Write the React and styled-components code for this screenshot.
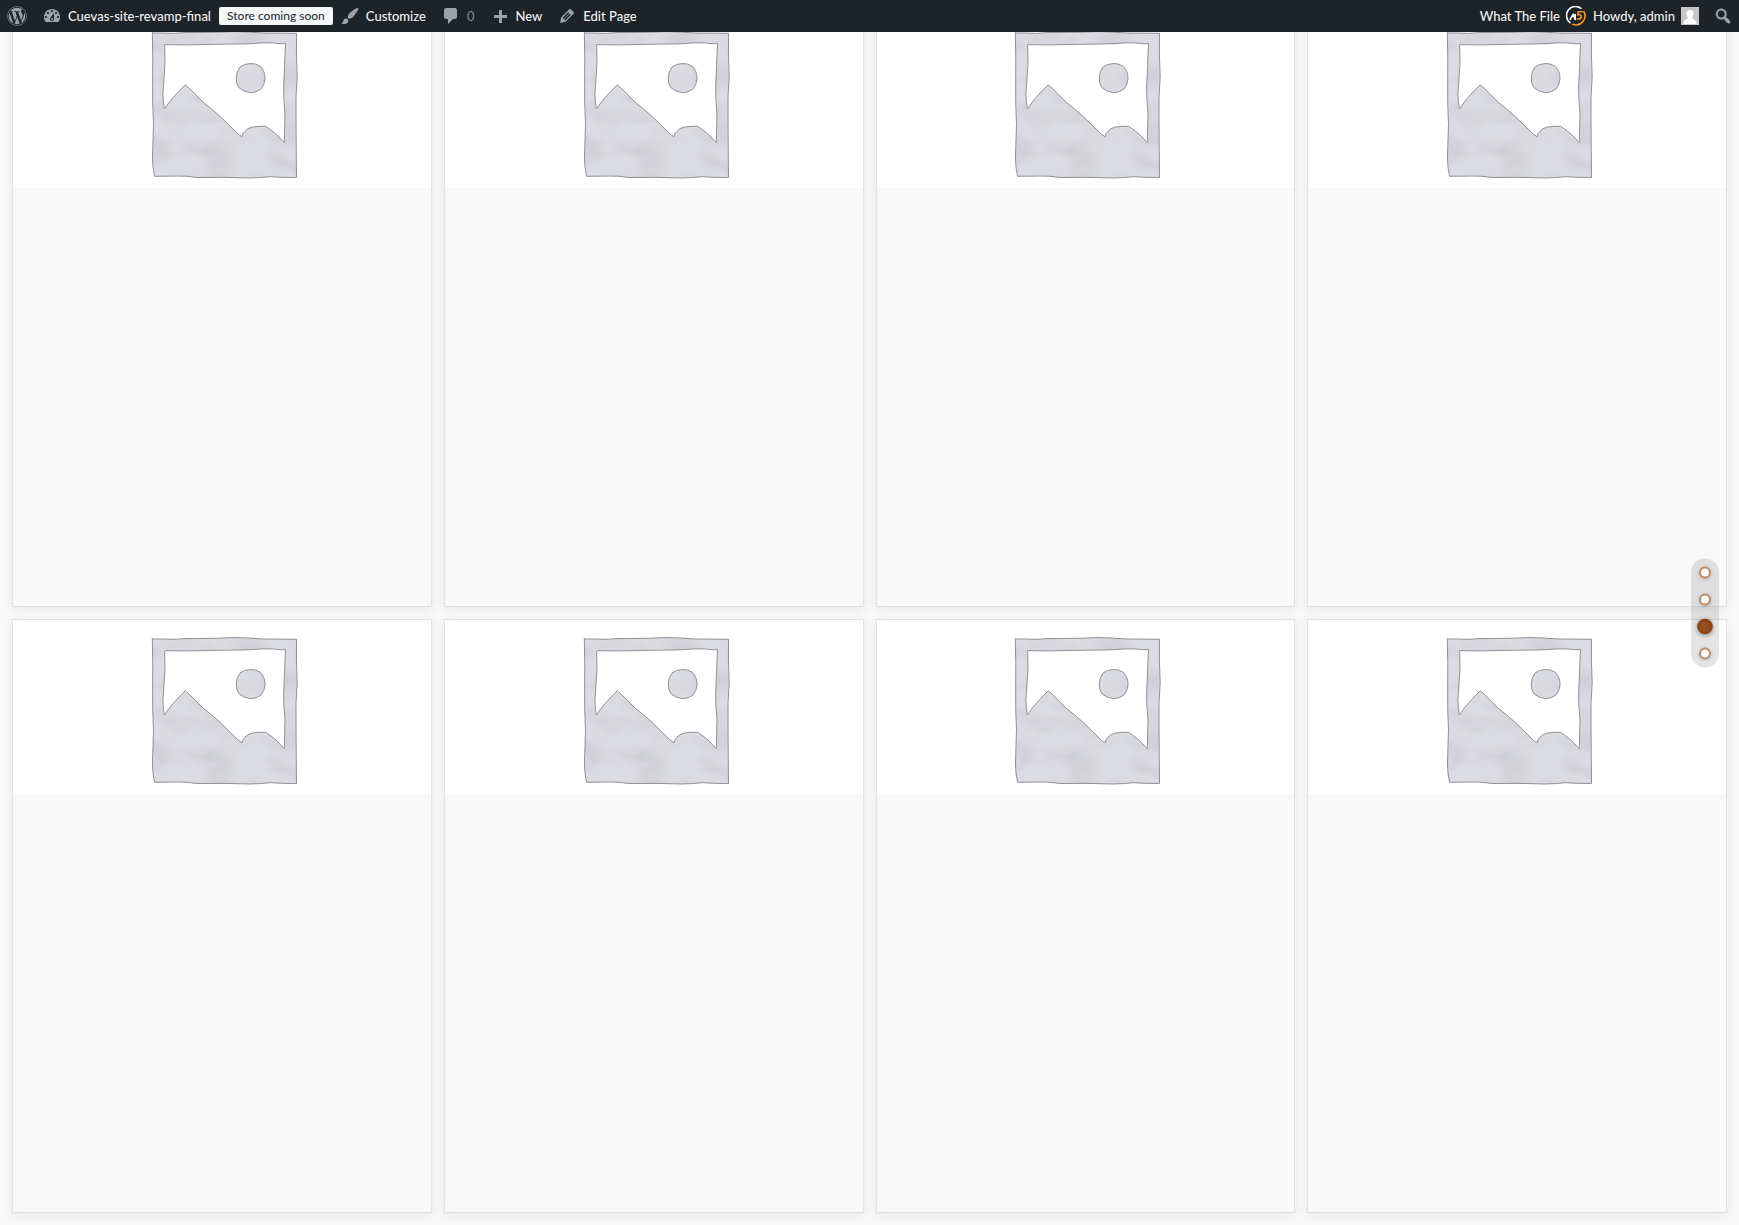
import React, { useId } from "react";
import styled, { createGlobalStyle } from "styled-components";
import { FaWordpress } from "react-icons/fa";

const Global = createGlobalStyle`
  *, *::before, *::after { box-sizing: border-box; }
  body {
    margin: 0;
    background: #f9f9f9;
    font-family: Lato, "Noto Sans", sans-serif;
  }
`;

const AdminBar = styled.header`
  position: fixed;
  inset: 0 0 auto 0;
  z-index: 10;
  height: 32px;
  display: flex;
  justify-content: space-between;
  background: #1d2327;
`;

const Group = styled.nav`
  display: flex;
  align-items: center;
`;

const BarLink = styled.a`
  height: 32px;
  display: flex;
  align-items: center;
  gap: 6px;
  padding: 0 ${(p) => (p.$joined ? 0 : 8)}px 0 7px;
  color: ${(p) => (p.$muted ? "#7f8387" : "#f0f0f1")};
  font-size: 13px;
  font-weight: 500;
  line-height: 32px;
  text-decoration: none;
  white-space: nowrap;
`;

const Badge = styled.a`
  height: 18px;
  padding: 0 8px;
  border-radius: 2px;
  background: #f6f7f7;
  color: #2c3338;
  font-size: 12px;
  font-weight: 500;
  line-height: 18px;
  text-decoration: none;
  white-space: nowrap;
`;

const SearchButton = styled.button`
  width: 32px;
  height: 32px;
  display: grid;
  place-items: center;
  padding: 0;
  border: 0;
  background: none;
`;

const Icon = styled.svg`
  width: 20px;
  height: 20px;
  flex: none;
  fill: #9ca2a7;
`;

const WordPressMark = styled(FaWordpress)`
  width: 20px;
  height: 20px;
  color: #9ca2a7;
`;

const Avatar = styled.svg`
  width: 18px;
  height: 18px;
  flex: none;
`;

const Products = styled.main`
  display: grid;
  grid-template-columns: repeat(4, minmax(0, 1fr));
  gap: 12px;
  padding: 13px 12px 12px;
`;

const Card = styled.article`
  border: 1px solid #e2e2e2;
  background: #f8f8f8;
  box-shadow: 0 2px 10px rgba(0, 0, 0, 0.08);
`;

const Thumb = styled.a`
  display: flex;
  justify-content: center;
  background: #fff;
`;

const Picture = styled.svg`
  width: 174px;
  height: 174px;
`;

const Details = styled.div`
  aspect-ratio: 1;
`;

const Dots = styled.nav`
  position: fixed;
  top: 50%;
  right: 20px;
  transform: translateY(-50%);
  width: 28px;
  display: flex;
  flex-direction: column;
  align-items: center;
  gap: 15px;
  padding: 8px 0;
  border-radius: 14px;
  background: rgba(0, 0, 0, 0.1);
`;

const Dot = styled.button`
  width: 12px;
  height: 12px;
  padding: 0;
  border: 2px solid ${(p) => (p.$active ? "#8b4513" : "#b98a6a")};
  border-radius: 50%;
  background: ${(p) => (p.$active ? "#955022" : "#fcfcfc")};
  box-shadow: 0 1px 4px rgba(0, 0, 0, ${(p) => (p.$active ? 0.4 : 0.2)});
  transform: ${(p) => (p.$active ? "scale(1.3)" : "none")};
`;

const ICONS = {
  dashboard:
    "M3.76 16h12.480c1.100-1.370 1.760-3.110 1.760-5 0-4.420-3.580-8-8-8s-8 3.580-8 8c0 1.890.66 3.630 1.760 5zM10 4c.55 0 1 .45 1 1s-.45 1-1 1-1-.45-1-1 .45-1 1-1zM6 6c.55 0 1 .45 1 1s-.45 1-1 1-1-.45-1-1 .45-1 1-1zm8 0c.55 0 1 .45 1 1s-.45 1-1 1-1-.45-1-1 .45-1 1-1zm-5.370 5.550L12 7v6c0 1.100-.9 2-2 2s-2-.9-2-2c0-.57.24-1.080.63-1.450zM4 10c.55 0 1 .45 1 1s-.45 1-1 1-1-.45-1-1 .45-1 1-1zm12 0c.55 0 1 .45 1 1s-.45 1-1 1-1-.45-1-1 .45-1 1-1zm-5 3c0-.55-.45-1-1-1s-1 .45-1 1 .45 1 1 1 1-.45 1-1z",
  brush:
    "M18.330 3.570s.27-.8-.31-1.360c-.53-.52-1.220-.24-1.220-.24-.61.3-5.760 3.470-7.670 5.570-.86.96-2.060 3.790-1.090 4.820.92.98 3.960-.17 4.790-1 2.060-2.060 5.210-7.170 5.500-7.790zM1.400 17.650c2.370-1.560 1.460-3.410 3.230-4.640.93-.65 2.220-.62 3.080.29.63.67.8 2.570-.16 3.460-1.570 1.450-4 1.550-6.150.89z",
  comment: "M5 2h9c1.100 0 2 .9 2 2v7c0 1.100-.9 2-2 2h-2l-5 5v-5H5c-1.100 0-2-.9-2-2V4c0-1.100.9-2 2-2z",
  plus: "M17 9v3h-5v5H9v-5H4V9h5V4h3v5h5z",
  pencil:
    "M13.890 3.390l2.710 2.720c.46.46.42 1.240.03 1.640l-8.010 8.020-5.560 1.160 1.160-5.580s7.600-7.630 7.990-8.030c.39-.39 1.220-.39 1.680.07zm-2.730 2.790l-5.590 5.610 1.110 1.110 5.540-5.650zm-2.970 8.230l5.580-5.600-1.070-1.080-5.590 5.600z",
  search:
    "M12.140 4.180c1.870 1.870 2.110 4.750.72 6.890.12.1.22.21.36.31.2.16.47.36.81.59.34.24.56.39.66.47.42.31.73.57.94.78.32.32.6.65.84 1 .25.35.44.69.59 1.040.14.35.21.68.18 1-.02.32-.14.59-.36.81s-.49.34-.81.36c-.31.02-.65-.04-.99-.19-.35-.14-.7-.34-1.040-.59-.35-.24-.68-.52-1-.84-.21-.21-.47-.52-.77-.93-.1-.13-.25-.35-.47-.66-.22-.32-.4-.57-.56-.78-.16-.2-.29-.35-.44-.5-2.070 1.090-4.690.76-6.440-.98-2.140-2.150-2.140-5.640 0-7.780 2.150-2.150 5.630-2.150 7.780 0zm-1.410 6.360c1.360-1.370 1.360-3.580 0-4.950-1.370-1.370-3.590-1.370-4.950 0-1.370 1.370-1.370 3.580 0 4.950 1.360 1.370 3.580 1.370 4.950 0z",
};

function BarIcon({ name }) {
  return (
    <Icon viewBox="0 0 20 20" aria-hidden="true">
      <path d={ICONS[name]} fillRule="evenodd" />
    </Icon>
  );
}

function FileLogo() {
  return (
    <Icon viewBox="0 0 20 20" aria-hidden="true">
      <g fill="none" strokeLinecap="round">
        <path d="M15 2.300 A9 9 0 0 0 4 16.600" stroke="#fff" strokeWidth="1.600" />
        <path d="M17.800 5.500 A9 9 0 0 1 6.800 18.300" stroke="#f7981d" strokeWidth="1.600" />
        <path d="M4.200 13.400 L7.300 8.200 L9.200 13.400 V8.600" stroke="#fff" strokeWidth="1.600" strokeLinejoin="round" />
        <path d="M16 5.800 H12.200 L11.800 8.800 Q15.600 8.400 15.200 11 Q14.700 13.400 11.400 13" stroke="#f7981d" strokeWidth="1.600" />
      </g>
    </Icon>
  );
}

function AdminAvatar() {
  return (
    <Avatar viewBox="0 0 18 18" aria-hidden="true">
      <rect width="18" height="18" fill="#c5c7c9" />
      <path
        d="M9 3 C11.600 3 12.800 4.800 12.500 7 Q12.200 9.500 11 10.600 Q11 11.800 12.500 12.300 Q15.300 13.200 15.500 17 H2.500 Q2.700 13.200 5.500 12.300 Q7 11.800 7 10.600 Q5.800 9.500 5.500 7 C5.200 4.800 6.400 3 9 3 Z"
        fill="#fff"
      />
    </Avatar>
  );
}

const FRAME =
  "M17.300 18.400 L19 19 Q28 18.800 38.500 19.400 Q50 18.200 61.500 18.500 Q82 18.500 101 17.500 Q115 18 128 19 L161.500 19.300 Q161 40 162.200 63 Q160.400 82 161 105 Q161.200 135 161.500 163.500 Q148 163.600 135 162.700 Q126 163.800 115 164 Q90 163 61.700 163.500 Q50 161.600 41.700 162 L19.500 162.300 Q17.400 153 17.500 143 Q18 126 18.500 110 Q17.300 88 17.700 67 Q18 42 17.300 18.400 Z";
const OPENING =
  "M29.700 30.600 L30 48 Q29 66 27.900 80 Q28.300 89 29.300 95 Q33.500 89 38.300 83.300 Q44 77 50.300 70.700 Q59 78.500 68.300 88.300 Q76.500 94.500 85 102.300 L103.300 120.200 L107 122.700 Q107.500 119.500 110 117.300 Q112 114.200 117.500 113 Q124 112 130.500 112.300 Q136.500 116 141.700 120.700 L149.300 128.700 Q149.600 115 150 100 Q148.500 86 148.700 73 Q149.600 50 150.500 29.300 L147 29.800 Q138 28.600 128 28.800 Q116 30 105 30 Q90 30 72 30.500 Q50 31.300 29.700 30.600 Z";
const SUN =
  "M115 49.600 Q121 49 125.500 52.500 Q130.300 57.500 130 65 Q129.500 71 126 75 Q121 78.700 115.500 78.700 Q108 77.600 104.300 74 Q101 70.500 101.300 64 Q101.500 57 105 53 Q109 49.800 115 49.600 Z";

function Placeholder() {
  const wash = useId();
  return (
    <Picture viewBox="0 0 174 174" role="img" aria-label="Product placeholder">
      <filter id={wash} x="0" y="0" width="100%" height="100%" colorInterpolationFilters="sRGB">
        <feTurbulence type="fractalNoise" baseFrequency="0.030 0.055" numOctaves="2" seed="4" />
        <feColorMatrix values="0 0 0 0 0.800  0 0 0 0 0.805  0 0 0 0 0.825  2 0 0 0 -0.800" />
        <feComposite in2="SourceGraphic" operator="in" result="tone" />
        <feMerge>
          <feMergeNode in="SourceGraphic" />
          <feMergeNode in="tone" />
        </feMerge>
      </filter>
      <g filter={`url(#${wash})`} fill="#dbdce1" fillRule="evenodd">
        <path d={FRAME + OPENING} />
        <path d={SUN} />
      </g>
      <g fill="none" stroke="#929296" strokeWidth="1" strokeLinejoin="round">
        <path d={FRAME} />
        <path d={OPENING} />
        <path d={SUN} />
      </g>
    </Picture>
  );
}

export default function App() {
  return (
    <>
      <Global />
      <AdminBar>
        <Group aria-label="Site">
          <BarLink href="#" aria-label="About WordPress"><WordPressMark /></BarLink>
          <BarLink href="#"><BarIcon name="dashboard" />Cuevas-site-revamp-final</BarLink>
          <Badge href="#">Store coming soon</Badge>
          <BarLink href="#"><BarIcon name="brush" />Customize</BarLink>
          <BarLink href="#" $muted><BarIcon name="comment" />0</BarLink>
          <BarLink href="#"><BarIcon name="plus" />New</BarLink>
          <BarLink href="#"><BarIcon name="pencil" />Edit Page</BarLink>
        </Group>
        <Group aria-label="Account">
          <BarLink href="#" $joined>What The File<FileLogo /></BarLink>
          <BarLink href="#">Howdy, admin<AdminAvatar /></BarLink>
          <SearchButton aria-label="Search"><BarIcon name="search" /></SearchButton>
        </Group>
      </AdminBar>
      <Products>
        {Array.from({ length: 8 }, (_, i) => (
          <Card key={i}>
            <Thumb href="#"><Placeholder /></Thumb>
            <Details />
          </Card>
        ))}
      </Products>
      <Dots aria-label="Sections">
        {[1, 2, 3, 4].map((n) => (
          <Dot key={n} $active={n === 3} aria-label={`Section ${n}`} />
        ))}
      </Dots>
    </>
  );
}
